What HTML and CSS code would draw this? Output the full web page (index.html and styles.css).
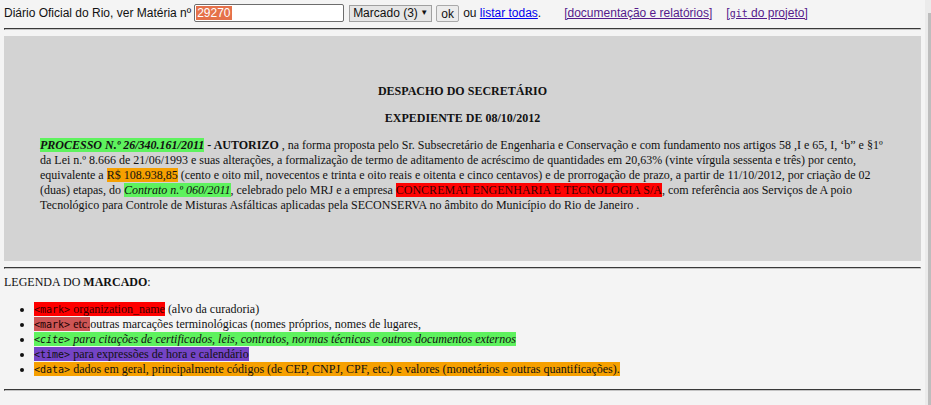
FILE: index.html
```html
<!DOCTYPE html>
<html lang="pt">
<head>
<meta charset="utf-8">
<title>Diário Oficial do Rio</title>
<link rel="stylesheet" href="styles.css">
</head>
<body>
<header class="topbar">
  <span class="lbl">Diário Oficial do Rio, ver Matéria nº</span>
  <span class="field"><span class="sel">29270</span></span>
  <span class="select"><span class="opt">Marcado (3)</span><span class="arrow">▼</span></span>
  <button class="btn" type="button">ok</button>
  <span class="ou">ou <a href="#" class="link">listar todas</a>.</span>
  <a href="#" class="visited docs">[documentação e relatórios]</a>
  <a href="#" class="visited git">[<code class="mono">git</code> do projeto]</a>
</header>
<hr class="rule">
<article class="doc">
  <p class="title">DESPACHO DO SECRETÁRIO</p>
  <p class="title">EXPEDIENTE DE 08/10/2012</p>
  <p class="text"><cite class="m-cite"><b>PROCESSO N.º 26/340.161/2011</b></cite> <b>- AUTORIZO</b> , na forma proposta pelo Sr. Subsecretário de Engenharia e Conservação e com fundamento nos artigos 58 ,I e 65, I, ‘b” e §1º da Lei n.º 8.666 de 21/06/1993 e suas alterações, a formalização de termo de aditamento de acréscimo de quantidades em 20,63% (vinte vírgula sessenta e três) por cento, equivalente a <data class="m-data" value="108938.85">R$ 108.938,85</data> (cento e oito mil, novecentos e trinta e oito reais e oitenta e cinco centavos) e de prorrogação de prazo, a partir de 11/10/2012, por criação de 02 (duas) etapas, do <cite class="m-cite">Contrato n.º 060/2011</cite>, celebrado pelo MRJ e a empresa <mark class="m-org">CONCREMAT ENGENHARIA E TECNOLOGIA S/A</mark>, com referência aos Serviços de A poio Tecnológico para Controle de Misturas Asfálticas aplicadas pela SECONSERVA no âmbito do Município do Rio de Janeiro .</p>
</article>
<hr class="rule">
<div class="legend-title">LEGENDA DO <b>MARCADO</b>:</div>
<ul class="legend">
  <li><mark class="m-org"><code class="mono">&lt;mark&gt;</code> organization_name</mark> (alvo da curadoria)</li>
  <li><mark class="m-etc"><code class="mono">&lt;mark&gt;</code> etc.</mark>outras marcações terminológicas (nomes próprios, nomes de lugares,</li>
  <li><cite class="m-cite"><code class="mono">&lt;cite&gt;</code> para citações de certificados, leis, contratos, normas técnicas e outros documentos externos</cite></li>
  <li><time class="m-time"><code class="mono">&lt;time&gt;</code> para expressões de hora e calendário</time></li>
  <li><data class="m-data" value="0"><code class="mono">&lt;data&gt;</code> dados em geral, principalmente códigos (de CEP, CNPJ, CPF, etc.) e valores (monetários e outras quantificações).</data></li>
</ul>
<hr class="rule">
<div class="scrollbar"><div class="thumb"></div></div>
</body>
</html>
```

FILE: styles.css
```css
html {
  background: #f4f4f4;
}
body {
  margin: 4px 10px 4px 4px;
  font-family: "Liberation Serif", "Times New Roman", serif;
  font-size: 12px;
  line-height: 15px;
  color: #111;
}
.topbar {
  display: flex;
  align-items: center;
  height: 18px;
  font-family: "Liberation Sans", Arial, sans-serif;
  font-size: 12px;
  line-height: 15px;
  color: #111;
}
.lbl {
  white-space: nowrap;
}
.field {
  margin-left: 3px;
  width: 150px;
  height: 18px;
  box-sizing: border-box;
  border: 1px solid #6d6d6d;
  border-radius: 2px;
  background: #fff;
  display: flex;
  align-items: center;
  padding-left: 1px;
}
.sel {
  background: #e5714a;
  color: #fff;
  line-height: 14px;
  padding: 0 1px;
}
.select {
  margin-left: 5px;
  width: 83px;
  height: 17px;
  box-sizing: border-box;
  border: 1px solid #a0a0a0;
  background: #e6e6e6;
  display: flex;
  align-items: center;
  justify-content: space-between;
  padding: 0 3px 0 3px;
  white-space: nowrap;
  flex-shrink: 0;
}
.opt {
  white-space: nowrap;
}
.arrow {
  font-size: 8px;
  line-height: 10px;
}
.btn {
  margin: 1px 0 0 4px;
  width: 23px;
  height: 17px;
  box-sizing: border-box;
  padding: 0;
  border: 1px solid #a9a9a9;
  border-radius: 2px;
  background: #ececec;
  font-family: "Liberation Sans", Arial, sans-serif;
  font-size: 12px;
  color: #111;
  flex-shrink: 0;
}
.ou {
  margin-left: 4px;
  white-space: nowrap;
}
.link {
  color: #0000ee;
}
.visited {
  color: #551a8b;
  white-space: nowrap;
}
.docs {
  margin-left: 23px;
}
.git {
  margin-left: 14px;
}
.mono {
  font-family: "DejaVu Sans Mono", monospace;
  font-size: 10px;
}
.rule {
  margin: 6px 0;
  border: 1px inset;
  color: #999;
  border-color: #8c8c8c #c4c4c4 #c4c4c4 #8c8c8c;
  height: 0;
}
.doc {
  background: #d3d3d3;
  padding: 36px;
}
.doc p {
  margin: 12px 0;
}
.title {
  text-align: center;
  font-weight: bold;
}
.m-cite {
  background: #5ef25e;
  font-style: italic;
}
.m-data {
  background: #f6a000;
}
.m-org {
  background: #ff0000;
  color: #3a0000;
}
.m-etc {
  background: #cd5555;
  color: #1a0000;
}
.m-time {
  background: #7444c6;
  color: #111;
}
.legend-title {
  margin: 0;
}
.legend {
  margin: 12px 0;
  padding-left: 30px;
}
.scrollbar {
  position: fixed;
  top: 0;
  right: 0;
  bottom: 0;
  width: 6px;
  background: #ebebeb;
  display: flex;
  justify-content: flex-end;
}
.thumb {
  margin-top: 13px;
  width: 3px;
  height: 392px;
  background: #bdbdbd;
}
```
